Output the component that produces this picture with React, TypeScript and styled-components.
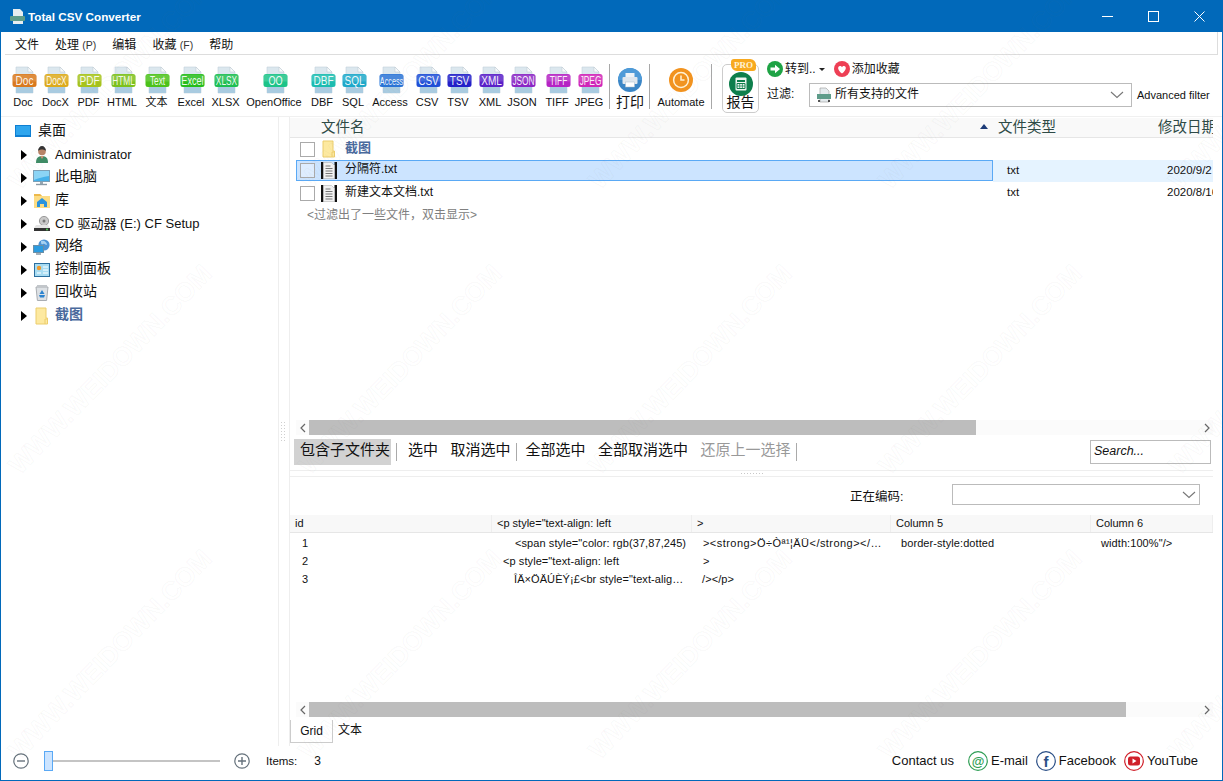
import React from 'react';
import styled, { createGlobalStyle } from 'styled-components';

const GlobalStyle = createGlobalStyle`
  html, body, #root { margin: 0; padding: 0; height: 100%; }
  body {
    overflow: hidden;
    background: #fff;
    color: #111;
    font-family: "Liberation Sans", "Noto Sans CJK SC", sans-serif;
  }
`;

const formats = [
  { name: 'Doc', tag: 'Doc', color: '#d9791e', width: 32 },
  { name: 'DocX', tag: 'DocX', color: '#dcaa1c', width: 33 },
  { name: 'PDF', tag: 'PDF', color: '#a6c31c', width: 33 },
  { name: 'HTML', tag: 'HTML', color: '#7cc11c', width: 34 },
  { name: '文本', tag: 'Text', color: '#4cc21a', width: 35 },
  { name: 'Excel', tag: 'Excel', color: '#25bd1a', width: 34 },
  { name: 'XLSX', tag: 'XLSX', color: '#1fbe52', width: 35 },
  { name: 'OpenOffice', tag: 'OO', color: '#1cc388', width: 62 },
  { name: 'DBF', tag: 'DBF', color: '#1cbcb0', width: 34 },
  { name: 'SQL', tag: 'SQL', color: '#1ea8c9', width: 28 },
  { name: 'Access', tag: 'Access', color: '#2a74d6', width: 46 },
  { name: 'CSV', tag: 'CSV', color: '#1f4fd6', width: 28 },
  { name: 'TSV', tag: 'TSV', color: '#2320c8', width: 34 },
  { name: 'XML', tag: 'XML', color: '#5a20c8', width: 30 },
  { name: 'JSON', tag: 'JSON', color: '#8a26c4', width: 34 },
  { name: 'TIFF', tag: 'TIFF', color: '#b524c4', width: 36 },
  { name: 'JPEG', tag: 'JPEG', color: '#d026b8', width: 28 },
];

// 라벨 글자 수에 따라 가로로 좁힌다
const tagScale: Record<number, number> = { 2: 0.7, 3: 0.77, 4: 0.64, 5: 0.7, 6: 0.66 };

function FormatIcon({ tag, color }: { tag: string; color: string }) {
  return (
    <FormatSvg width="25" height="28" viewBox="0 0 25 28">
      <path d="M4 1h12l5 5v21H4z" fill="#dbe7ee" stroke="#c4d2da" strokeWidth="0.6" />
      <path d="M16 1l5 5h-5z" fill="#f6f9fb" stroke="#b9c6ce" strokeWidth="0.5" />
      <path d="M4 21h17v6H4z" fill="#a9cbe0" />
      <rect x="0.5" y="8" width="24" height="13" rx="2.5" fill={color} />
      <path d="M1 12h23" stroke="#fff" strokeOpacity="0.15" strokeWidth="7" />
      <g transform={`translate(12.5 19) scale(${tagScale[tag.length]} 1)`}>
        <text
          x="0"
          y="0"
          textAnchor="middle"
          fontSize={tag.length > 5 ? 11 : 13}
          fill="#fff"
          fillOpacity="0.92"
          fontFamily="Liberation Sans, sans-serif"
        >
          {tag}
        </text>
      </g>
    </FormatSvg>
  );
}

function FolderIcon() {
  return (
    <svg width="16" height="18" viewBox="0 0 16 18">
      <path d="M2 1h10v10l1.5 0V17H2z" fill="#fde9a0" stroke="#eccd6c" />
      <path d="M11 17v-5h3" fill="none" stroke="#eccd6c" />
    </svg>
  );
}

function TextFileIcon() {
  return (
    <svg width="16" height="17" viewBox="0 0 16 17">
      <rect x="0" y="0" width="2.5" height="17" fill="#111" />
      <rect x="13.5" y="0" width="2.500" height="17" fill="#111" />
      <path d="M2.5 0.5h8l3 3v13h-11z" fill="#f2f2f2" stroke="#b5b5b5" strokeWidth="0.6" />
      <path d="M4.5 4h5M4.5 6.500h7M4.500 9h7M4.500 11.500h7M4.500 14h7" stroke="#777" strokeWidth="1" />
    </svg>
  );
}

function PersonIcon() {
  return (
    <svg width="16" height="17" viewBox="0 0 16 17">
      <path d="M2 17c0-5 2-7 6-7s6 2 6 7z" fill="#3f8c66" />
      <path d="M6 10l2 3 2-3z" fill="#c99478" />
      <circle cx="8" cy="5.5" r="3.8" fill="#b98468" />
      <path d="M4 5c0-3 2-5 4-5s4 2 4 5c-2-2-6-2-8 0z" fill="#333" />
    </svg>
  );
}

function MonitorIcon() {
  return (
    <svg width="17" height="16" viewBox="0 0 17 16">
      <rect x="0.5" y="0.5" width="16" height="11" fill="#45b1ea" stroke="#7d9fb5" />
      <path d="M1 1h15v5C10 7 5 8 1 10z" fill="#8bd4f5" />
      <path d="M7 12h3v2H7z" fill="#97a7b2" />
      <path d="M3 14.5h11" stroke="#8b9ba6" strokeWidth="1.4" />
    </svg>
  );
}

function LibraryIcon() {
  return (
    <svg width="16" height="15" viewBox="0 0 16 15">
      <path d="M0 1h6l2 2h8v12H0z" fill="#fcdc84" />
      <path d="M0 1h6l2 2H0z" fill="#edb94b" />
      <path d="M8 5l5 4v5h-3v-3H6v3H3V9z" fill="#2a93dd" />
    </svg>
  );
}

function DriveIcon() {
  return (
    <svg width="16" height="16" viewBox="0 0 16 16">
      <circle cx="10" cy="5" r="4.6" fill="#c9c9c9" stroke="#9a9a9a" />
      <circle cx="10" cy="5" r="1.5" fill="#777" />
      <path d="M2 9h12l2 3v3H0v-3z" fill="#e5e5e5" />
      <path d="M0 12h16v3H0z" fill="#333" />
      <circle cx="13" cy="13.5" r="0.9" fill="#56e05a" />
    </svg>
  );
}

function NetworkIcon() {
  return (
    <svg width="17" height="16" viewBox="0 0 17 16">
      <circle cx="11" cy="6" r="5.6" fill="#4b93d6" />
      <path d="M8 2c3-1 6 1 6 4-2 0-2-2-4-1S8 4 8 2z" fill="#a7d2f2" />
      <rect x="0.5" y="6.5" width="10" height="7" fill="#2b9be0" stroke="#6a8ea6" />
      <path d="M3 15h5" stroke="#7d8f9c" strokeWidth="1.4" />
    </svg>
  );
}

function ControlPanelIcon() {
  return (
    <svg width="16" height="14" viewBox="0 0 16 14">
      <rect x="0.5" y="0.5" width="15" height="13" fill="#a8dcf2" stroke="#2b6f9f" />
      <circle cx="5" cy="5" r="2.2" fill="#f09a2b" />
      <path d="M9 4h5M9 7h5M3 10h4M9 10h5" stroke="#fff" strokeWidth="1.2" />
    </svg>
  );
}

function BinIcon() {
  return (
    <svg width="14" height="17" viewBox="0 0 14 17">
      <path d="M1 3h12l-1.4 13.5H2.4z" fill="#dde1e5" stroke="#a9adb2" />
      <path d="M2 1h10v2H2z" fill="#c2c6ca" />
      <path d="M7 6l2.5 4h-5zM4 11h6l-1 2.5H5z" fill="#2b83cf" />
    </svg>
  );
}

function DesktopIcon() {
  return (
    <svg width="16" height="12" viewBox="0 0 16 12">
      <rect width="16" height="12" fill="#0f7fd2" />
      <rect x="1" y="1" width="14" height="9" fill="#2fa6ee" />
    </svg>
  );
}

function WindowButtons() {
  return (
    <WinButtons>
      <svg width="11" height="11" viewBox="0 0 11 11">
        <path d="M0 5.5h11" stroke="#fff" />
      </svg>
      <svg width="11" height="11" viewBox="0 0 11 11">
        <rect x="0.5" y="0.5" width="10" height="10" fill="none" stroke="#fff" />
      </svg>
      <svg width="11" height="11" viewBox="0 0 11 11">
        <path d="M0.5 0.5l10 10M10.5 0.5l-10 10" stroke="#fff" />
      </svg>
    </WinButtons>
  );
}

function ChevronDown() {
  return (
    <svg width="14" height="8" viewBox="0 0 14 8">
      <path d="M1 1l6 5.5L13 1" fill="none" stroke="#777" strokeWidth="1.1" />
    </svg>
  );
}

function Scrollbar({ thumb }: { thumb: number }) {
  return (
    <ScrollTrack>
      <ScrollButton>
        <svg width="6" height="10" viewBox="0 0 6 10">
          <path d="M5 1L1 5l4 4" fill="none" stroke="#666" strokeWidth="1.2" />
        </svg>
      </ScrollButton>
      <ScrollThumb $width={thumb} />
      <ScrollSpace />
      <ScrollButton>
        <svg width="6" height="10" viewBox="0 0 6 10">
          <path d="M1 1l4 4-4 4" fill="none" stroke="#666" strokeWidth="1.2" />
        </svg>
      </ScrollButton>
    </ScrollTrack>
  );
}

const treeItems = [
  { label: 'Administrator', icon: <PersonIcon />, small: true },
  { label: '此电脑', icon: <MonitorIcon /> },
  { label: '库', icon: <LibraryIcon /> },
  { label: 'CD 驱动器 (E:) CF Setup', icon: <DriveIcon />, small: true },
  { label: '网络', icon: <NetworkIcon /> },
  { label: '控制面板', icon: <ControlPanelIcon /> },
  { label: '回收站', icon: <BinIcon /> },
  { label: '截图', icon: <FolderIcon />, bold: true },
];

const gridRows = [
  {
    id: '1',
    cells: [
      { text: '<span style="color: rgb(37,87,245)', pad: 23 },
      { text: '><strong>Ö÷Òª¹¦ÄÜ</strong></…', pad: 11, wide: true },
      { text: 'border-style:dotted', pad: 10 },
      { text: 'width:100%"/>', pad: 10 },
    ],
  },
  {
    id: '2',
    cells: [
      { text: '<p style="text-align: left', pad: 11 },
      { text: '>', pad: 11 },
    ],
  },
  {
    id: '3',
    cells: [
      { text: 'ÎÄ×ÖÄÚÈÝ¡£<br style="text-alig…', pad: 22 },
      { text: '/></p>', pad: 10 },
    ],
  },
];

export default function App() {
  return (
    <Page>
      <GlobalStyle />
      <TitleBar>
        <TitleIcon>
          <svg width="15" height="15" viewBox="0 0 15 15">
            <path d="M3 0h7l3 3v12H3z" fill="#e6edf0" />
            <rect x="0" y="7" width="15" height="5" rx="1" fill="#5e9c8a" />
          </svg>
        </TitleIcon>
        <TitleText>Total CSV Converter</TitleText>
        <WindowButtons />
      </TitleBar>

      <MenuBar>
        <MenuItem>文件</MenuItem>
        <MenuItem>处理 <Hot>(P)</Hot></MenuItem>
        <MenuItem>编辑</MenuItem>
        <MenuItem>收藏 <Hot>(F)</Hot></MenuItem>
        <MenuItem>帮助</MenuItem>
      </MenuBar>

      <Toolbar>
        {formats.map((f) => (
          <ToolItem key={f.name} $width={f.width}>
            <FormatIcon tag={f.tag} color={f.color} />
            <ToolLabel>{f.name}</ToolLabel>
          </ToolItem>
        ))}
        <ToolSep $left={6} />
        <ToolItem $width={36}>
          <RoundIcon>
            <svg width="24" height="24" viewBox="0 0 24 24">
              <circle cx="12" cy="12" r="12" fill="#3b86c6" />
              <path d="M12 0a12 12 0 0 1 12 12H0A12 12 0 0 1 12 0z" fill="#4f9bd8" />
              <rect x="7.5" y="5" width="9" height="4" fill="#eef3f7" />
              <rect x="4.5" y="9" width="15" height="7" rx="1" fill="#dfe7ee" />
              <rect x="7.5" y="14" width="9" height="5" fill="#fff" stroke="#a9bccb" strokeWidth="0.5" />
            </svg>
          </RoundIcon>
          <ToolLabelBig>打印</ToolLabelBig>
        </ToolItem>
        <ToolSep />
        <ToolItem $width={58}>
          <RoundIcon>
            <svg width="24" height="24" viewBox="0 0 24 24">
              <circle cx="12" cy="12" r="12" fill="#f2931f" />
              <circle cx="12" cy="12" r="7.4" fill="none" stroke="#fff2d6" strokeWidth="1.5" />
              <path d="M12 7.5V12h3.5" fill="none" stroke="#fff2d6" strokeWidth="1.5" />
            </svg>
          </RoundIcon>
          <AutomateLabel>Automate</AutomateLabel>
        </ToolItem>
        <ToolSep />
        <ReportBox>
          <ProBadge>PRO</ProBadge>
          <RoundIcon>
            <svg width="24" height="24" viewBox="0 0 24 24">
              <circle cx="12" cy="12" r="12" fill="#0e7f4c" />
              <rect x="6.5" y="5.5" width="11" height="13" rx="1" fill="#eef6f1" />
              <path d="M8 8h8v2H8z" fill="#0e7f4c" />
              <path d="M8 11.5h8v5H8z" fill="none" stroke="#0e7f4c" />
              <path d="M10.7 11.5v5M13.4 11.5v5M8 14h8" stroke="#0e7f4c" strokeWidth="0.7" />
            </svg>
          </RoundIcon>
          <ReportLabel>报告</ReportLabel>
        </ReportBox>
        <ToolRight>
          <RightRow>
            <svg width="16" height="16" viewBox="0 0 16 16">
              <circle cx="8" cy="8" r="8" fill="#1ea345" />
              <path d="M3.5 6.5h4.5V3.8L13 8l-5 4.2V9.5H3.5z" fill="#fff" />
            </svg>
            <SmallCjk>转到..</SmallCjk>
            <Caret />
            <FavIcon>
              <svg width="16" height="16" viewBox="0 0 16 16">
                <circle cx="8" cy="8" r="8" fill="#ee3f55" />
                <path d="M8 12.5C3 9 3.5 5 6 5c1 0 1.6.6 2 1.2C8.4 5.6 9 5 10 5c2.5 0 3 4-2 7.5z" fill="#fff" />
              </svg>
            </FavIcon>
            <SmallCjk>添加收藏</SmallCjk>
          </RightRow>
          <RightRow>
            <FilterLabel>过滤:</FilterLabel>
            <FilterCombo>
              <svg width="16" height="16" viewBox="0 0 16 16">
                <path d="M4 1h6l3 3v11H4z" fill="#e5ebee" stroke="#999" strokeWidth="0.6" />
                <rect x="1" y="7" width="14" height="5" fill="#5e9c8a" />
                <path d="M2 14h2M12 14h2" stroke="#222" strokeWidth="1.6" />
              </svg>
              <ComboText>所有支持的文件</ComboText>
              <ChevronDown />
            </FilterCombo>
            <AdvancedLink>Advanced filter</AdvancedLink>
          </RightRow>
        </ToolRight>
      </Toolbar>

      <Main>
        <TreePane>
          <TreeRoot>
            <DesktopIcon />
            <TreeRootLabel>桌面</TreeRootLabel>
          </TreeRoot>
          {treeItems.map((item) => (
            <TreeRow key={item.label}>
              <TreeArrow />
              <TreeIconSlot>{item.icon}</TreeIconSlot>
              <TreeLabel $small={item.small} $bold={item.bold}>{item.label}</TreeLabel>
            </TreeRow>
          ))}
        </TreePane>

        <Splitter>
          <SplitGrip />
        </Splitter>

        <RightPane>
          <FilePane>
            <FileHeader>
              <HeaderName>
                文件名
                <SortArrow />
              </HeaderName>
              <HeaderType>文件类型</HeaderType>
              <HeaderDate>修改日期</HeaderDate>
            </FileHeader>
            <FileRow>
              <NameCell>
                <CheckBox />
                <FileIconSlot><FolderIcon /></FileIconSlot>
                <FolderName>截图</FolderName>
              </NameCell>
            </FileRow>
            <FileRow $selected>
              <NameCell $selected>
                <CheckBox />
                <FileIconSlot><TextFileIcon /></FileIconSlot>
                <FileName>分隔符.txt</FileName>
              </NameCell>
              <TypeCell>txt</TypeCell>
              <DateCell>2020/9/2</DateCell>
            </FileRow>
            <FileRow>
              <NameCell>
                <CheckBox />
                <FileIconSlot><TextFileIcon /></FileIconSlot>
                <FileName>新建文本文档.txt</FileName>
              </NameCell>
              <TypeCell>txt</TypeCell>
              <DateCell>2020/8/16</DateCell>
            </FileRow>
            <FilterHint>&lt;过滤出了一些文件，双击显示&gt;</FilterHint>
          </FilePane>
          <Scrollbar thumb={667} />

          <SelectBar>
            <SelectButton $active>包含子文件夹</SelectButton>
            <BarSep />
            <SelectGroup>
              <SelectButton>选中</SelectButton>
              <SelectButton>取消选中</SelectButton>
            </SelectGroup>
            <BarSep $right={9} />
            <SelectGroup>
              <SelectButton>全部选中</SelectButton>
              <SelectButton>全部取消选中</SelectButton>
              <SelectButton $muted>还原上一选择</SelectButton>
            </SelectGroup>
            <BarSep />
            <SearchBox>Search...</SearchBox>
          </SelectBar>

          <HSplit>
            <HGrip />
          </HSplit>

          <EncodingRow>
            <EncodingLabel>正在编码:</EncodingLabel>
            <EncodingCombo>
              <ChevronDown />
            </EncodingCombo>
          </EncodingRow>

          <DataGrid>
            <GridHeader>
              <HeadCell>id</HeadCell>
              <HeadCell>&lt;p style="text-align: left</HeadCell>
              <HeadCell>&gt;</HeadCell>
              <HeadCell>Column 5</HeadCell>
              <HeadCell>Column 6</HeadCell>
            </GridHeader>
            {gridRows.map((row) => (
              <GridRow key={row.id}>
                <IdCell>{row.id}</IdCell>
                {row.cells.map((c) => (
                  <DataCell key={c.text} $pad={c.pad} $wide={c.wide}>{c.text}</DataCell>
                ))}
              </GridRow>
            ))}
          </DataGrid>

          <Scrollbar thumb={817} />

          <TabRow>
            <ActiveTab>Grid</ActiveTab>
            <PlainTab>文本</PlainTab>
          </TabRow>
        </RightPane>
      </Main>

      <StatusBar>
        <ZoomIcon>
          <svg width="16" height="16" viewBox="0 0 16 16">
            <circle cx="8" cy="8" r="7.2" fill="none" stroke="#66727c" strokeWidth="1.2" />
            <path d="M4 8h8" stroke="#66727c" strokeWidth="1.4" />
          </svg>
        </ZoomIcon>
        <SliderThumb />
        <SliderTrack />
        <ZoomIcon>
          <svg width="16" height="16" viewBox="0 0 16 16">
            <circle cx="8" cy="8" r="7.2" fill="none" stroke="#66727c" strokeWidth="1.2" />
            <path d="M4 8h8M8 4v8" stroke="#66727c" strokeWidth="1.4" />
          </svg>
        </ZoomIcon>
        <ItemsLabel>Items:</ItemsLabel>
        <ItemsCount>3</ItemsCount>
        <StatusSpace />
        <ContactLabel>Contact us</ContactLabel>
        <ContactLink>
          <svg width="20" height="20" viewBox="0 0 20 20">
            <circle cx="10" cy="10" r="9.3" fill="none" stroke="#2f9e55" strokeWidth="1.2" />
            <text x="10" y="14.5" textAnchor="middle" fontSize="13" fontWeight="700" fill="#2f9e55" fontFamily="Liberation Sans, sans-serif">@</text>
          </svg>
          E-mail
        </ContactLink>
        <ContactLink>
          <svg width="20" height="20" viewBox="0 0 20 20">
            <circle cx="10" cy="10" r="9.3" fill="none" stroke="#2b4f86" strokeWidth="1.2" />
            <text x="10" y="15.5" textAnchor="middle" fontSize="15" fontWeight="700" fill="#2b4f86" fontFamily="Liberation Sans, sans-serif">f</text>
          </svg>
          Facebook
        </ContactLink>
        <ContactLink>
          <svg width="20" height="20" viewBox="0 0 20 20">
            <circle cx="10" cy="10" r="9.3" fill="none" stroke="#d0202a" strokeWidth="1.2" />
            <rect x="4" y="5.5" width="12" height="9" rx="2.5" fill="#d0202a" />
            <path d="M8.5 7.5l4 2.500-4 2.500z" fill="#fff" />
          </svg>
          YouTube
        </ContactLink>
      </StatusBar>

      <Watermark aria-hidden="true">
        {Array.from({ length: 15 }).map((_, i) => (
          <WatermarkTile key={i}>
            <WatermarkText>WWW.WEIDOWN.COM</WatermarkText>
          </WatermarkTile>
        ))}
      </Watermark>
    </Page>
  );
}

const Page = styled.div`
  position: relative;
  display: flex;
  flex-direction: column;
  width: 1223px;
  height: 781px;
  box-sizing: border-box;
  overflow: hidden;
  border-left: 1px solid #0169ba;
  border-right: 1px solid #0169ba;
  border-bottom: 1px solid #0169ba;
  background: #fff;
`;

const TitleBar = styled.div`
  display: flex;
  align-items: center;
  height: 32px;
  flex: none;
  margin: 0 -1px;
  padding-left: 10px;
  background: #0169ba;
  color: #fff;
`;

const TitleIcon = styled.div`
  display: flex;
  width: 18px;
`;

const TitleText = styled.div`
  font-size: 11.7px;
  font-weight: 700;
  flex: 1;
`;

const WinButtons = styled.div`
  display: flex;
  align-items: center;
  gap: 35px;
  padding-right: 18px;
`;

const MenuBar = styled.div`
  display: flex;
  align-items: center;
  flex: none;
  height: 22px;
  margin: 0 4px 0 4px;
  padding-left: 10px;
  border-right: 1px solid #ddd;
  border-bottom: 1px solid #ddd;
  font-size: 12px;
  gap: 16px;
`;

const MenuItem = styled.span`
  white-space: pre;
`;

const Hot = styled.span`
  font-size: 10.5px;
  color: #333;
`;

const Toolbar = styled.div`
  position: relative;
  display: flex;
  align-items: flex-start;
  flex: none;
  height: 62px;
  padding: 9px 0 0 6px;
  box-sizing: border-box;
  border-bottom: 1px solid #f0f0f0;
`;

const ToolItem = styled.div<{ $width: number }>`
  display: flex;
  flex-direction: column;
  align-items: center;
  width: ${(p) => p.$width}px;
  flex: none;
`;

const FormatSvg = styled.svg`
  flex: none;
  margin: 2px 0 0 2px;
`;

const ToolLabel = styled.div`
  font-size: 11px;
  line-height: 14px;
  margin-top: 1px;
  white-space: nowrap;
`;

const AutomateLabel = styled(ToolLabel)`
  margin-top: 3px;
`;

const ToolLabelBig = styled.div`
  font-size: 14px;
  line-height: 18px;
  margin-top: 1px;
  white-space: nowrap;
`;

const ReportLabel = styled(ToolLabelBig)`
  margin-top: -3px;
`;

const RoundIcon = styled.div`
  display: flex;
  height: 24px;
  margin-top: 4px;
`;

const ToolSep = styled.div<{ $left?: number }>`
  flex: none;
  width: 1px;
  height: 45px;
  margin: 0 2px 0 ${(p) => p.$left ?? 1}px;
  background: #a8a8a8;
`;

const ReportBox = styled.div`
  position: relative;
  display: flex;
  flex-direction: column;
  align-items: center;
  flex: none;
  box-sizing: border-box;
  width: 37px;
  height: 49px;
  margin-left: 8px;
  padding-top: 3px;
  border: 1px solid #ccc;
  border-radius: 5px;
`;

const ProBadge = styled.div`
  position: absolute;
  top: -6px;
  left: 8px;
  width: 25px;
  height: 12px;
  border-radius: 3px 6px 3px 6px;
  background: #f8a91f;
  color: #fff3d6;
  font: 700 9px/12px "Liberation Serif", serif;
  text-align: center;
`;

const ToolRight = styled.div`
  display: flex;
  flex-direction: column;
  margin-left: 8px;
  margin-top: -3px;
  width: 445px;
  gap: 6px;
`;

const RightRow = styled.div`
  display: flex;
  align-items: center;
  min-height: 16px;
`;

const SmallCjk = styled.span`
  font-size: 12px;
  line-height: 16px;
  margin-left: 2px;
`;

const Caret = styled.span`
  width: 0;
  height: 0;
  margin: 1px 0 0 3px;
  border-left: 3px solid transparent;
  border-right: 3px solid transparent;
  border-top: 3px solid #222;
`;

const FavIcon = styled.span`
  display: flex;
  margin-left: 9px;
`;

const FilterLabel = styled.span`
  font-size: 12px;
  line-height: 16px;
  padding-bottom: 2px;
  width: 42px;
`;

const FilterCombo = styled.div`
  display: flex;
  align-items: center;
  flex: none;
  box-sizing: border-box;
  width: 323px;
  height: 24px;
  padding: 0 7px 0 6px;
  border: 1px solid #bbb;
`;

const ComboText = styled.span`
  flex: 1;
  margin-left: 3px;
  font-size: 12px;
  line-height: 16px;
  padding-bottom: 2px;
`;

const AdvancedLink = styled.span`
  font-size: 11px;
  margin-left: 5px;
  white-space: nowrap;
`;

const Main = styled.div`
  display: flex;
  flex: none;
  height: 629px;
`;

const TreePane = styled.div`
  flex: none;
  width: 278px;
  box-sizing: border-box;
  padding-top: 2px;
  border-right: 1px solid #eee;
`;

const TreeRoot = styled.div`
  display: flex;
  align-items: center;
  height: 24px;
  padding-left: 14px;
`;

const TreeRootLabel = styled.span`
  margin-left: 7px;
  font-size: 14px;
  line-height: 18px;
  padding-bottom: 3px;
`;

const TreeRow = styled.div`
  display: flex;
  align-items: center;
  height: 23px;
  padding-left: 20px;
`;

const TreeArrow = styled.span`
  width: 0;
  height: 0;
  border-top: 5px solid transparent;
  border-bottom: 5px solid transparent;
  border-left: 6px solid #000;
`;

const TreeIconSlot = styled.span`
  display: flex;
  justify-content: center;
  width: 17px;
  margin-left: 6px;
`;

const TreeLabel = styled.span<{ $small?: boolean; $bold?: boolean }>`
  margin-left: 5px;
  font-size: ${(p) => (p.$small ? 13 : 14)}px;
  line-height: 18px;
  padding-bottom: ${(p) => (p.$small ? 0 : 3)}px;
  font-weight: ${(p) => (p.$bold ? 700 : 400)};
  color: ${(p) => (p.$bold ? '#4a6a9c' : '#111')};
  white-space: nowrap;
`;

const Splitter = styled.div`
  position: relative;
  flex: none;
  width: 10px;
  border-right: 1px solid #eee;
`;

const SplitGrip = styled.div`
  position: absolute;
  top: 304px;
  left: 1px;
  width: 6px;
  height: 22px;
  background-image: radial-gradient(#cfcfcf 0.8px, transparent 1px);
  background-size: 3px 3px;
`;

const RightPane = styled.div`
  display: flex;
  flex-direction: column;
  flex: none;
  width: 923px;
  overflow: hidden;
`;

const FilePane = styled.div`
  flex: none;
  height: 303px;
  padding-top: 1px;
  box-sizing: border-box;
`;

const FileHeader = styled.div`
  display: flex;
  align-items: center;
  box-sizing: border-box;
  height: 20px;
  padding-bottom: 2px;
  background: #f9f9f9;
  border-bottom: 1px solid #e6e6e6;
  font-size: 14.5px;
  line-height: 18px;
  color: #2e4a46;
  white-space: nowrap;
`;

const HeaderName = styled.div`
  display: flex;
  align-items: center;
  justify-content: space-between;
  flex: none;
  box-sizing: border-box;
  width: 708px;
  padding: 0 10px 0 31px;
`;

const SortArrow = styled.span`
  width: 0;
  height: 0;
  border-left: 4px solid transparent;
  border-right: 4px solid transparent;
  border-bottom: 5px solid #1d3c78;
`;

const HeaderType = styled.div`
  flex: none;
  width: 160px;
`;

const HeaderDate = styled.div`
  flex: none;
`;

const FileRow = styled.div<{ $selected?: boolean }>`
  display: flex;
  align-items: flex-start;
  height: 22px;
  padding-left: 6px;
  font-size: 12px;
  background: linear-gradient(
    90deg,
    transparent 0,
    transparent 703px,
    ${(p) => (p.$selected ? '#e5f3ff' : 'transparent')} 703px
  );
`;

const NameCell = styled.div<{ $selected?: boolean }>`
  display: flex;
  align-items: center;
  flex: none;
  box-sizing: border-box;
  width: 697px;
  height: ${(p) => (p.$selected ? 21 : 22)}px;
  padding-left: 4px;
  background: ${(p) => (p.$selected ? '#cce4ff' : 'transparent')};
  outline: ${(p) => (p.$selected ? '1px solid #5aa9f5' : 'none')};
  outline-offset: -1px;
`;

const CheckBox = styled.span`
  flex: none;
  box-sizing: border-box;
  width: 15px;
  height: 15px;
  border: 1px solid #aaa;
  background: rgba(255, 255, 255, 0.35);
`;

const FileIconSlot = styled.span`
  display: flex;
  justify-content: center;
  width: 16px;
  margin-left: 6px;
`;

const FolderName = styled.span`
  margin-left: 8px;
  font-size: 13px;
  line-height: 18px;
  padding-bottom: 3px;
  font-weight: 700;
  color: #4a6a9c;
`;

const FileName = styled.span`
  margin-left: 8px;
  line-height: 18px;
  padding-bottom: 3px;
`;

const TypeCell = styled.span`
  flex: none;
  width: 160px;
  padding-left: 14px;
  box-sizing: border-box;
  font-size: 11.5px;
  line-height: 21px;
`;

const DateCell = styled.span`
  flex: none;
  padding-left: 14px;
  font-size: 11.5px;
  line-height: 21px;
  white-space: nowrap;
`;

const FilterHint = styled.div`
  height: 22px;
  line-height: 22px;
  padding-left: 17px;
  font-size: 12px;
  color: #808080;
`;

const ScrollTrack = styled.div`
  display: flex;
  align-items: center;
  flex: none;
  height: 15px;
  margin-left: 6px;
  background: #fbfbfb;
`;

const ScrollButton = styled.span`
  display: flex;
  align-items: center;
  justify-content: center;
  flex: none;
  width: 13px;
  height: 15px;
`;

const ScrollThumb = styled.span<{ $width: number }>`
  flex: none;
  width: ${(p) => p.$width}px;
  height: 15px;
  background: #bdbdbd;
`;

const ScrollSpace = styled.span`
  flex: 1;
`;

const SelectBar = styled.div`
  display: flex;
  align-items: center;
  flex: none;
  height: 33px;
  padding-left: 4px;
  font-size: 15px;
  line-height: 20px;
`;

const SelectGroup = styled.div`
  display: flex;
  gap: 12.5px;
`;

const SelectButton = styled.span<{ $active?: boolean; $muted?: boolean }>`
  display: flex;
  align-items: center;
  box-sizing: border-box;
  height: 26px;
  padding: ${(p) => (p.$active ? '0 1px 3px 6px' : '0 0 3px 0')};
  background: ${(p) => (p.$active ? '#d2d2d2' : 'transparent')};
  color: ${(p) => (p.$muted ? '#999' : '#111')};
  white-space: nowrap;
`;

const BarSep = styled.span<{ $right?: number }>`
  flex: none;
  width: 1px;
  height: 18px;
  margin: 0 ${(p) => p.$right ?? 11}px 0 5px;
  background: #aaa;
`;

const SearchBox = styled.div`
  display: flex;
  align-items: center;
  box-sizing: border-box;
  width: 121px;
  height: 24px;
  margin-left: auto;
  margin-right: 2px;
  padding: 0 0 1px 3px;
  border: 1px solid #bbb;
  font-size: 12.5px;
  font-style: italic;
`;

const HSplit = styled.div`
  position: relative;
  flex: none;
  height: 5px;
  margin-top: 2px;
  border-top: 1px solid #eee;
  border-bottom: 1px solid #eee;
`;

const HGrip = styled.div`
  position: absolute;
  top: 1px;
  left: 450px;
  width: 25px;
  height: 3px;
  background-image: radial-gradient(#c8c8c8 0.8px, transparent 1px);
  background-size: 3px 3px;
`;

const EncodingRow = styled.div`
  display: flex;
  align-items: center;
  flex: none;
  height: 21px;
  margin-top: 7px;
  padding-left: 560px;
`;

const EncodingLabel = styled.span`
  width: 102px;
  font-size: 12.5px;
  padding-top: 2px;
`;

const EncodingCombo = styled.div`
  display: flex;
  align-items: center;
  justify-content: flex-end;
  box-sizing: border-box;
  width: 248px;
  height: 21px;
  padding-right: 3px;
  border: 1px solid #bbb;
`;

const DataGrid = styled.div`
  flex: none;
  height: 187px;
  margin-top: 10px;
  overflow: hidden;
`;

const GridHeader = styled.div`
  display: grid;
  grid-template-columns: 202px 200px 199px 200px 122px;
  height: 18px;
  margin-bottom: 1px;
  box-sizing: border-box;
  background: #f8f8f8;
  border-bottom: 1px solid #e6e6e6;
`;

const HeadCell = styled.div`
  box-sizing: border-box;
  padding-left: 5px;
  font-size: 11px;
  line-height: 17px;
  border-right: 1px solid #eeeeee;
  white-space: nowrap;
`;

const GridRow = styled.div`
  display: grid;
  grid-template-columns: 202px 200px 199px 200px 122px;
  height: 18px;
  align-items: center;
  font-size: 11px;
`;

const IdCell = styled.div`
  padding-left: 12px;
`;

const DataCell = styled.div<{ $pad: number; $wide?: boolean }>`
  padding-left: ${(p) => p.$pad}px;
  letter-spacing: ${(p) => (p.$wide ? 0.45 : 0.08)}px;
  white-space: nowrap;
  overflow: hidden;
`;

const TabRow = styled.div`
  display: flex;
  flex: none;
  height: 27px;
  padding-top: 3px;
  box-sizing: border-box;
`;

const ActiveTab = styled.div`
  box-sizing: border-box;
  width: 43px;
  height: 23px;
  line-height: 22px;
  text-align: center;
  font-size: 12px;
  border: 1px solid #ccc;
  border-top: none;
`;

const PlainTab = styled.div`
  margin-left: 5px;
  font-size: 12px;
  line-height: 20px;
`;

const StatusBar = styled.div`
  display: flex;
  align-items: center;
  flex: 1;
  padding-left: 12px;
  padding-bottom: 5px;
`;

const ZoomIcon = styled.span`
  display: flex;
`;

const SliderThumb = styled.span`
  flex: none;
  box-sizing: border-box;
  width: 9px;
  height: 20px;
  margin-left: 15px;
  background: #cce4ff;
  border: 1px solid #5aa9f5;
`;

const SliderTrack = styled.span`
  flex: none;
  width: 167px;
  height: 2px;
  margin-right: 14px;
  background: #c4c4c4;
`;

const ItemsLabel = styled.span`
  margin-left: 16px;
  font-size: 11.5px;
`;

const ItemsCount = styled.span`
  margin-left: 17px;
  font-size: 12px;
`;

const StatusSpace = styled.span`
  flex: 1;
`;

const ContactLabel = styled.span`
  font-size: 13px;
  margin-right: 14px;
`;

const ContactLink = styled.span`
  display: flex;
  align-items: center;
  gap: 3px;
  margin-right: 8px;
  font-size: 13px;
  &:last-child {
    margin-right: 24px;
  }
`;

const Watermark = styled.div`
  position: absolute;
  top: -58px;
  left: -36px;
  display: grid;
  grid-template-columns: repeat(5, 290px);
  grid-auto-rows: 285px;
  pointer-events: none;
`;

const WatermarkTile = styled.div`
  display: flex;
  align-items: center;
  justify-content: center;
`;

const WatermarkText = styled.span`
  transform: rotate(-46deg);
  font: 700 26px "Liberation Sans", sans-serif;
  color: transparent;
  -webkit-text-stroke: 1px rgba(120, 120, 120, 0.05);
  white-space: nowrap;
`;
